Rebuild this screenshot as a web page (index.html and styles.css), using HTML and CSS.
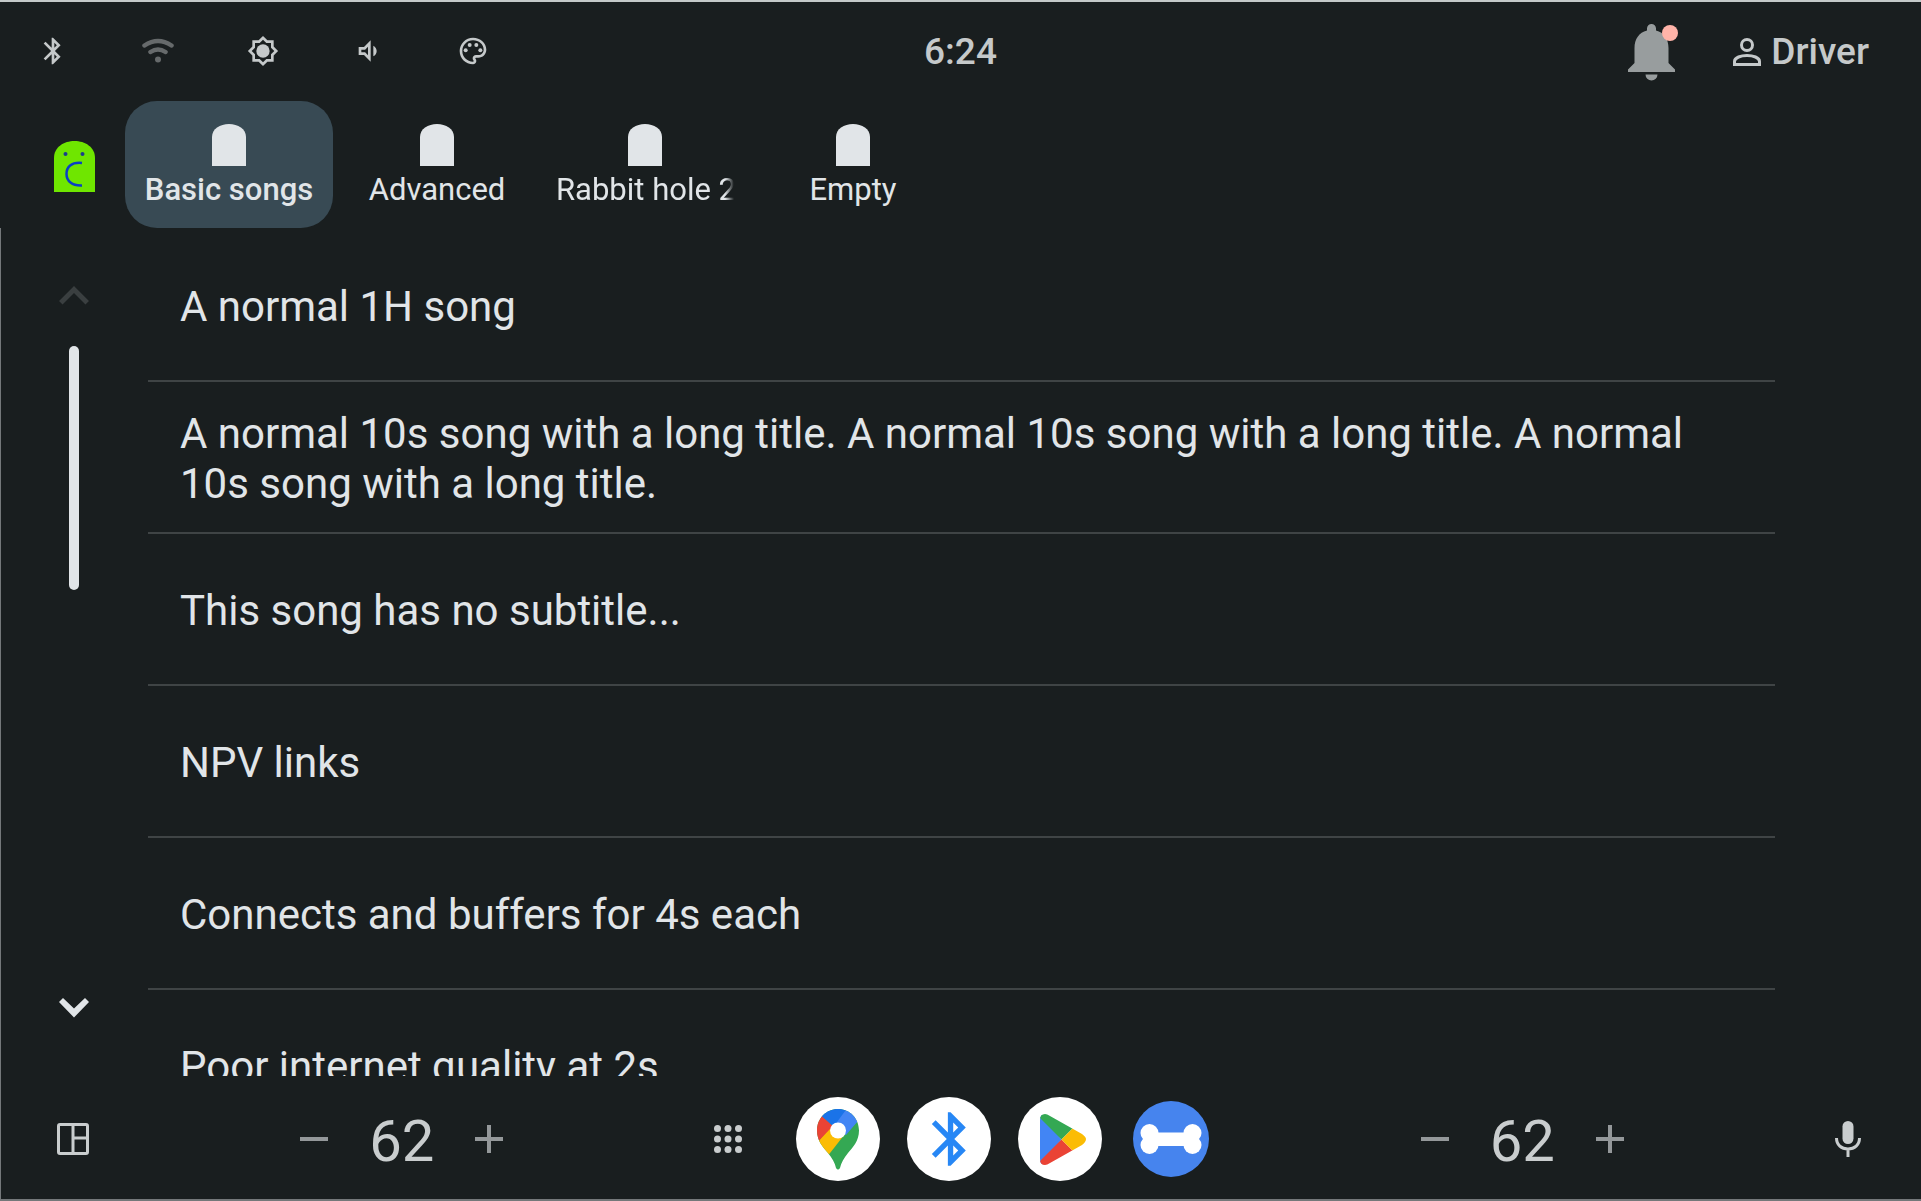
FILE: index.html
```
<!DOCTYPE html>
<html lang="en">
<head>
<meta charset="utf-8"/>
<meta name="viewport" content="width=device-width,initial-scale=1.0"/>
    <title>Media - Basic songs</title>

    <link rel="stylesheet" href="styles.css">
</head>
<body>
<header class="status">
    <div class="quick">
        <button type="button" aria-label="Bluetooth"><svg class="icon" viewBox="0 0 24 24"><path d="M17.71 7.71L12 2h-1v7.59L6.41 5 5 6.41 10.59 12 5 17.59 6.41 19 11 14.41V22h1l5.71-5.71-4.3-4.29 4.3-4.29zM13 5.83l1.88 1.88L13 9.59V5.83zm1.88 10.46L13 18.17v-3.76l1.88 1.88z"/></svg></button>
        <button type="button" class="off" aria-label="Wi-Fi"><svg class="icon" viewBox="0 0 32 32"><path d="M2.5 10.5Q16 1.5 29.5 10.5M8.5 17Q16 12 23.5 17" fill="none" stroke="currentColor" stroke-width="4.5" stroke-linecap="round"/><circle cx="16" cy="24.5" r="3"/></svg></button>
        <button type="button" aria-label="Brightness"><svg class="icon" viewBox="0 0 24 24"><path d="M20 8.69V4h-4.69L12 .69 8.69 4H4v4.69L.69 12 4 15.31V20h4.69L12 23.31 15.31 20H20v-4.69L23.31 12 20 8.69zm-2 5.79V18h-3.52L12 20.48 9.52 18H6v-3.52L3.52 12 6 9.52V6h3.52L12 3.52 14.48 6H18v3.52L20.48 12 18 14.48z"/><circle cx="12" cy="12" r="5"/></svg></button>
        <button type="button" aria-label="Volume"><svg class="icon" viewBox="0 0 24 24"><path d="M16 7.97v8.05c1.48-.73 2.5-2.25 2.5-4.02 0-1.77-1.02-3.29-2.5-4.03zM5 9v6h4l5 5V4L9 9H5zm7-.17v6.34L9.83 13H7v-2h2.83L12 8.83z"/></svg></button>
        <button type="button" aria-label="Theme"><svg class="icon" viewBox="0 0 24 24"><path d="M12 22C6.49 22 2 17.51 2 12S6.49 2 12 2s10 4.04 10 9c0 3.31-2.69 6-6 6h-1.77c-.28 0-.5.22-.5.5 0 .12.05.23.13.33.41.47.64 1.06.64 1.67 0 1.38-1.12 2.5-2.5 2.5zm0-18c-4.41 0-8 3.59-8 8s3.59 8 8 8c.28 0 .5-.22.5-.5 0-.16-.08-.28-.14-.35-.41-.46-.63-1.05-.63-1.65 0-1.38 1.12-2.5 2.5-2.5H16c2.21 0 4-1.79 4-4 0-3.86-3.59-7-8-7z"/><circle cx="6.5" cy="11.5" r="1.5"/><circle cx="9.5" cy="7.5" r="1.5"/><circle cx="14.5" cy="7.5" r="1.5"/><circle cx="17.5" cy="11.5" r="1.5"/></svg></button>
    </div>
    <time class="clock">6:24</time>
    <div class="user">
        <button type="button" class="bell" aria-label="Notifications"><svg viewBox="0 0 50 58"><path d="M23.5 1a4.5 4.5 0 0 0-4.5 4.5V7.5C11 9.5 6.5 16 6.5 25V40L0 46.5V49H47V46.5L40.5 40V25C40.5 16 36 9.5 28 7.5V5.5A4.5 4.5 0 0 0 23.5 1zM17.5 51.5a6 6 0 0 0 12 0z" fill="#989d9e"/><circle cx="42" cy="10" r="8" fill="#ffb4a9"/></svg></button>
        <button type="button" class="driver"><svg viewBox="0 0 30 30"><g fill="none" stroke="currentColor" stroke-width="3"><circle cx="15" cy="8" r="5.5"/><path d="M2.5 27.5V24.5C2.5 20.5 9 18.5 15 18.5S27.5 20.5 27.5 24.5V27.5z"/></g></svg>Driver</button>
    </div>
</header><!-- status -->

<nav class="tabs">
    <svg class="app" viewBox="0 0 41 51"><path d="M0 51V17C0 6 10 0 20.5 0S41 6 41 17V51z" fill="#6fe600"/><circle cx="11.5" cy="13" r="2" fill="#1a3f8c"/><circle cx="28.5" cy="13" r="2" fill="#1a3f8c"/><path d="M28 22C17 21 12.5 26 12.5 33S18 45 28 44.5" fill="none" stroke="#0a3fc4" stroke-width="2.5"/></svg>
    <button type="button" class="tab on"><svg viewBox="0 0 34 42"><path d="M0 42V13C0 5 8 0 17 0S34 5 34 13V42z"/></svg><span>Basic songs</span></button>
    <button type="button" class="tab"><svg viewBox="0 0 34 42"><path d="M0 42V13C0 5 8 0 17 0S34 5 34 13V42z"/></svg><span>Advanced</span></button>
    <button type="button" class="tab"><svg viewBox="0 0 34 42"><path d="M0 42V13C0 5 8 0 17 0S34 5 34 13V42z"/></svg><span class="fade">Rabbit hole 2</span></button>
    <button type="button" class="tab"><svg viewBox="0 0 34 42"><path d="M0 42V13C0 5 8 0 17 0S34 5 34 13V42z"/></svg><span>Empty</span></button>
</nav><!-- tabs -->

<main class="browse">
    <div class="rail">
        <button type="button" aria-label="Scroll up" disabled><svg viewBox="0 0 24 24"><path d="M12 8l-6 6 1.41 1.41L12 10.83l4.59 4.58L18 14z"/></svg></button>
        <div class="track"><div class="thumb"></div></div>
        <button type="button" aria-label="Scroll down"><svg viewBox="0 0 24 24"><path d="M16.4 8L12 12.2 7.6 8 6 9.6l6 6.2 6-6.2z"/></svg></button>
    </div>
    <ul class="songs">
        <li>A normal 1H song</li>
        <li>A normal 10s song with a long title. A normal 10s song with a long title. A normal 10s song with a long title.</li>
        <li>This song has no subtitle...</li>
        <li>NPV links</li>
        <li>Connects and buffers for 4s each</li>
        <li>Poor internet quality at 2s</li>
    </ul>
</main><!-- browse -->

<footer class="dock">
    <button type="button" aria-label="Home layout"><svg class="panel" viewBox="0 0 32 32"><path d="M3 1.5H29Q30.5 1.5 30.5 3V29Q30.5 30.5 29 30.5H3Q1.5 30.5 1.5 29V3Q1.5 1.5 3 1.5zM16 1.5V30.5M16 15H30.5" fill="none" stroke="currentColor" stroke-width="3"/></svg></button>
    <div class="temp">
        <button type="button" aria-label="Cooler"><svg viewBox="0 0 28 28"><path d="M0 12h28v4H0z"/></svg></button>
        <span>62</span>
        <button type="button" aria-label="Warmer"><svg viewBox="0 0 28 28"><path d="M12 0h4v12h12v4H16v12h-4V16H0v-4h12z"/></svg></button>
    </div>
    <div class="apps">
        <button type="button" class="grid" aria-label="All apps"><svg viewBox="0 0 28 28"><circle cx="3.5" cy="3.5" r="3.5"/><circle cx="14" cy="3.5" r="3.5"/><circle cx="24.5" cy="3.5" r="3.5"/><circle cx="3.5" cy="14" r="3.5"/><circle cx="14" cy="14" r="3.5"/><circle cx="24.5" cy="14" r="3.5"/><circle cx="3.5" cy="24.5" r="3.5"/><circle cx="14" cy="24.5" r="3.5"/><circle cx="24.5" cy="24.5" r="3.5"/></svg></button>
        <button type="button" class="round" aria-label="Maps"><svg viewBox="0 0 84 84">
            <defs><clipPath id="pin"><path d="M42 12C30 12 21 21.5 21 33.5C21 44 27 50 32 56C36 61 39 66 40 71Q42 74 44 71C45 66 48 61 52 56C57 50 63 44 63 33.5C63 21.5 54 12 42 12z"/></clipPath></defs>
            <g clip-path="url(#pin)">
                <path d="M0 0H84V84H0z" fill="#34a853"/>
                <path d="M10 60L34 30 56 28 27 65z" fill="#fbbc04"/>
                <path d="M0 0H20L27 20 42 33.5 34 32 17 50 0 50z" fill="#ea4335"/>
                <path d="M20 14L42 0H60L50 13 42 33.5z" fill="#1a73e8"/>
                <path d="M55 6L41 25 42 33.5 50 38 62 24 75 15z" fill="#4285f4"/>
            </g>
            <circle cx="42" cy="33.5" r="8" fill="#fff"/></svg></button>
        <button type="button" class="round" aria-label="Bluetooth"><svg viewBox="0 0 84 84"><path transform="translate(11.5 10) scale(2.67)" fill="#2787f5" d="M17.71 7.71L12 2h-1v7.59L6.41 5 5 6.41 10.59 12 5 17.59 6.41 19 11 14.41V22h1l5.71-5.71-4.3-4.29 4.3-4.29zM13 5.83l1.88 1.88L13 9.59V5.83zm1.88 10.46L13 18.17v-3.76l1.88 1.88z"/></svg></button>
        <button type="button" class="round" aria-label="Play Store"><svg viewBox="0 0 84 84">
            <defs><clipPath id="play"><path d="M22 23Q22 17 27 17Q29 17 32 19L64 37Q68 40 68 42Q68 45 64 48L32 66Q29 68 27 68Q22 68 22 62z"/></clipPath></defs>
            <g clip-path="url(#play)">
                <path d="M22 15V70L43.5 42.5z" fill="#4285f4"/>
                <path d="M20 10L21 20 43.5 42.5 60 26z" fill="#34a853"/>
                <path d="M20 75L21 65 43.5 42.5 60 59z" fill="#ea4335"/>
                <path d="M43.5 42.5L60 26H75V59H60z" fill="#fbbc04"/>
            </g></svg></button>
        <button type="button" class="round bone" aria-label="Bone"><svg viewBox="0 0 76 76"><path d="M16 31.5H60V45H16z"/><circle cx="16.5" cy="32" r="9"/><circle cx="16.5" cy="44" r="9"/><circle cx="59.5" cy="32" r="9"/><circle cx="59.5" cy="44" r="9"/></svg></button>
    </div>
    <div class="temp">
        <button type="button" aria-label="Cooler"><svg viewBox="0 0 28 28"><path d="M0 12h28v4H0z"/></svg></button>
        <span>62</span>
        <button type="button" aria-label="Warmer"><svg viewBox="0 0 28 28"><path d="M12 0h4v12h12v4H16v12h-4V16H0v-4h12z"/></svg></button>
    </div>
    <button type="button" aria-label="Assistant"><svg class="mic" viewBox="0 0 26 36"><rect x="7.5" y="0" width="11" height="23" rx="5.5"/><path d="M1.5 17C1.5 24 6.5 28 13 28S24.5 24 24.5 17M13 28V36" fill="none" stroke="currentColor" stroke-width="3"/></svg></button>
</footer><!-- dock -->
</body>
</html>
```
FILE: styles.css
```
*{margin:0;padding:0;box-sizing:border-box;}
li{list-style:none;}
svg{display:block;fill:currentColor;}

body{
    display:flex;flex-direction:column;
    height:100vh;overflow:hidden;
    background:#191e1f;
    border-top:2px solid #c4c9c9;
    border-bottom:2px solid #74787a;
    color:#e1e5e8;
    font-family:Roboto,"Liberation Sans",sans-serif;}

button{
    flex:none;
    background:none;border:0;
    color:inherit;font:inherit;
    cursor:pointer;}

/* status bar */
.status{
    flex:none;
    display:grid;grid-template-columns:1fr auto 1fr;
    align-items:center;
    height:99px;
    color:#c5c9ca;
    font-size:37px;font-weight:500;}

.quick{display:flex;gap:73px;padding:0 0 2px 37px;}
.icon{width:32px;height:32px;}
.off{color:#666a6b;}

.user{
    display:flex;
    justify-content:flex-end;align-items:center;
    gap:54px;
    padding-right:52px;}

.bell svg{width:50px;height:58px;}
.driver{display:flex;align-items:center;gap:9px;}
.driver svg{width:30px;height:30px;}

/* category tabs */
.tabs{
    flex:none;
    display:flex;align-items:center;
    height:127px;
    padding-left:54px;}

.app{
    width:41px;height:51px;
    margin:4px 30px 0 0;}

.tab{
    display:flex;flex-direction:column;
    align-items:center;
    width:208px;height:100%;
    padding:23px 15px 0;
    border-radius:32px;
    font-size:31px;line-height:48px;}

.tab svg{width:34px;height:42px;}
.tab span{
    overflow:hidden;
    width:100%;
    white-space:nowrap;}
.tab .fade{
    text-align:left;
    mask-image:linear-gradient(to right,#000 95%,transparent);}
.tab.on{background:#384a54;font-weight:500;}

/* list */
.browse{
    flex:1;
    display:flex;overflow:hidden;
    min-height:0;
    border-left:1px solid #74787a;}

.rail{
    flex:none;
    display:flex;flex-direction:column;
    align-items:center;
    width:147px;
    padding:38px 1px 38px 0;}

.rail svg{width:60px;height:60px;}
.rail button:disabled{color:#3a3f40;}

.track{flex:1;padding-top:20px;}
.thumb{
    width:10px;height:244px;
    background:#e1e5e8;
    border-radius:5px;}

.songs{flex:1;padding-top:2px;margin-right:146px;}
.songs li{
    display:flex;align-items:center;
    min-height:152px;
    padding:4px 32px 0;
    border-bottom:2px solid #3f4445;
    font-size:42px;line-height:50px;}

/* dock */
.dock{
    flex:none;
    display:flex;
    justify-content:space-between;align-items:center;
    height:123px;
    padding:2px 60px 0 56px;
    border-left:1px solid #74787a;
    color:#c9cdce;}

.panel{width:32px;height:32px;}
.mic{width:26px;height:36px;}

.temp{
    display:flex;align-items:center;
    gap:41px;
    font-size:58px;line-height:64px;}
.temp span{padding-top:4px;}
.temp button{color:#94989a;}
.temp svg{width:28px;height:28px;}

.apps{display:flex;align-items:center;gap:27px;}
.grid{margin-right:27px;}
.grid svg{width:28px;height:28px;}

.round{
    width:84px;height:84px;
    background:#fff;
    border-radius:50%;}

.bone{
    width:76px;height:76px;
    background:#4684ee;
    color:#fff;
    margin-left:4px;}
```
